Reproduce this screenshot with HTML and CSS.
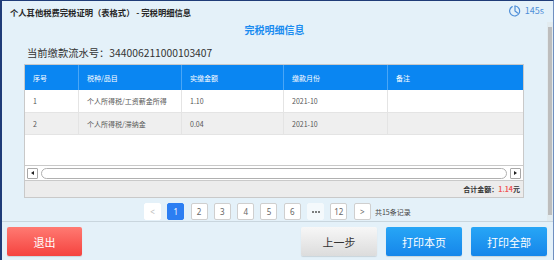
FILE: index.html
```html
<!DOCTYPE html>
<html lang="zh-CN">
<head>
<meta charset="utf-8">
<title>完税明细信息</title>
<link rel="stylesheet" href="styles.css">
</head>
<body>
<div class="window">
  <div class="titlebar">
    <div class="title">个人其他税费完税证明（表格式） - 完税明细信息</div>
    <div class="timer">
      <svg class="clock" width="12" height="12" viewBox="0 0 12 12">
        <path d="M3.2 1.6 A5 5 0 1 0 6 1" fill="none" stroke="#4f8fd8" stroke-width="1.2" stroke-linecap="round"/>
        <path d="M6 1 L6 6 L8.6 8" fill="none" stroke="#4f8fd8" stroke-width="1.2" stroke-linecap="round" stroke-linejoin="round"/>
      </svg>
      <span>145s</span>
    </div>
  </div>
  <div class="main">
    <div class="content">
      <div class="heading">完税明细信息</div>
      <div class="serial">当前缴款流水号：344006211000103407</div>
      <div class="table">
        <div class="row head">
          <div class="cell">序号</div>
          <div class="cell">税种/品目</div>
          <div class="cell">实缴金额</div>
          <div class="cell">缴款月份</div>
          <div class="cell">备注</div>
        </div>
        <div class="row r1">
          <div class="cell">1</div>
          <div class="cell">个人所得税/工资薪金所得</div>
          <div class="cell">1.10</div>
          <div class="cell">2021-10</div>
          <div class="cell"></div>
        </div>
        <div class="row r2">
          <div class="cell">2</div>
          <div class="cell">个人所得税/滞纳金</div>
          <div class="cell">0.04</div>
          <div class="cell">2021-10</div>
          <div class="cell"></div>
        </div>
        <div class="empty"></div>
        <div class="hscroll">
          <div class="sbtn"><span class="tri-l"></span></div>
          <div class="track"></div>
          <div class="sbtn"><span class="tri-r"></span></div>
        </div>
        <div class="total">合计金额：<span class="amt">1.14</span>元</div>
      </div>
      <div class="pager">
        <div class="pg nav dis">&lt;</div>
        <div class="pg active">1</div>
        <div class="pg">2</div>
        <div class="pg">3</div>
        <div class="pg">4</div>
        <div class="pg">5</div>
        <div class="pg">6</div>
        <div class="pg more"><i></i><i></i><i></i></div>
        <div class="pg">12</div>
        <div class="pg nav">&gt;</div>
        <div class="count">共15条记录</div>
      </div>
    </div>
    <div class="vscroll"><div class="thumb"></div></div>
  </div>
  <div class="footer">
    <button class="btn red">退出</button>
    <div class="right">
      <button class="btn gray">上一步</button>
      <button class="btn blue">打印本页</button>
      <button class="btn blue">打印全部</button>
    </div>
  </div>
</div>
</body>
</html>
```
FILE: styles.css
```css
* { box-sizing: border-box; }
html, body { margin: 0; padding: 0; }
body {
  font-family: "Noto Sans CJK SC", "Noto Sans", sans-serif;
  width: 554px;
  height: 260px;
  overflow: hidden;
}
.window {
  width: 554px;
  height: 260px;
  background: #e4f1f9;
  border-top: 1px solid #1f3c78;
  border-left: 2px solid #1f3c78;
  border-right: 1px solid #6f8fc0;
  display: flex;
  flex-direction: column;
}
.titlebar {
  height: 21px;
  flex: none;
  display: flex;
  align-items: center;
  justify-content: space-between;
  padding: 0 9px 0 8px;
}
.title {
  font-size: 8.3px;
  font-weight: bold;
  color: #262626;
  line-height: 12px;
}
.timer {
  display: flex;
  align-items: center;
  gap: 4px;
  color: #4f8fd8;
  font-size: 9px;
  line-height: 12px;
  margin-top: -2px;
}
.clock { display: block; }
.main {
  height: 199px;
  flex: none;
  display: flex;
}
.content {
  flex: 1;
  display: flex;
  flex-direction: column;
}
.heading {
  margin-top: 1px;
  height: 14px;
  line-height: 14px;
  text-align: center;
  font-size: 10px;
  font-weight: bold;
  color: #1a8cf0;
}
.serial {
  margin-top: 9px;
  height: 14px;
  line-height: 14px;
  padding-left: 25px;
  font-size: 10.3px;
  color: #333;
}
.table {
  margin: 4px 0 0 22px;
  width: 500px;
  border: 1px solid #c9c9c9;
  background: #fff;
  display: flex;
  flex-direction: column;
}
.row {
  display: grid;
  grid-template-columns: 54px 103px 102px 104px 1fr;
  font-size: 7px;
  color: #555;
}
.cell {
  padding-left: 8px;
  display: flex;
  align-items: center;
  border-right: 1px solid #e4e4e4;
}
.cell:last-child { border-right: none; }
.head {
  height: 25px;
  background: #0a86f2;
  color: #fff;
}
.head .cell { border-right-color: #4aa6f6; }
.r1 { height: 23px; border-bottom: 1px solid #e4e4e4; }
.r2 { height: 22px; background: #efefef; border-bottom: 1px solid #e4e4e4; }
.empty { height: 30px; }
.hscroll {
  height: 15px;
  border-top: 1px solid #c9c9c9;
  display: flex;
  align-items: center;
  padding: 0 2px;
  gap: 3px;
}
.sbtn {
  width: 11px;
  height: 11px;
  border: 1px solid #a8a8a8;
  border-radius: 1px;
  background: #fff;
  display: flex;
  align-items: center;
  justify-content: center;
}
.tri-l {
  width: 0; height: 0;
  border-top: 2.5px solid transparent;
  border-bottom: 2.5px solid transparent;
  border-right: 3px solid #222;
}
.tri-r {
  width: 0; height: 0;
  border-top: 2.5px solid transparent;
  border-bottom: 2.5px solid transparent;
  border-left: 3px solid #222;
}
.track {
  flex: 1;
  height: 11px;
  border: 1px solid #b0b0b0;
  border-radius: 6px;
  background: #fff;
}
.total {
  height: 17px;
  border-top: 1px solid #c9c9c9;
  background: #ececec;
  font-size: 7px;
  font-weight: bold;
  color: #333;
  display: flex;
  align-items: center;
  justify-content: flex-end;
  padding-right: 3px;
}
.amt { color: #f05555; }
.pager {
  margin-top: 5px;
  padding-left: 142px;
  display: flex;
  align-items: center;
  gap: 6.3px;
  height: 17px;
}
.pg {
  width: 17px;
  height: 17px;
  border: 1px solid #cfcfcf;
  border-radius: 2px;
  background: #fff;
  color: #666;
  font-size: 8px;
  display: flex;
  align-items: center;
  justify-content: center;
  font-family: "Noto Sans", sans-serif;
}
.pg.dis { border-color: #fff; color: #bbb; }
.pg.more {
  border-color: #f4f9fc;
  background: #f4f9fc;
  gap: 1px;
}
.pg.more i {
  width: 2px;
  height: 2px;
  border-radius: 50%;
  background: #555;
}
.pg.active { background: #2c7ef2; border-color: #2c7ef2; color: #fff; }
.count {
  font-size: 7px;
  color: #444;
  margin-left: -2px;
}
.vscroll {
  width: 6px;
  background: #e2ebef;
  display: flex;
  flex-direction: column;
  padding: 5px 1px 6px 1px;
}
.thumb {
  flex: 1;
  background: #bdbdbd;
}
.footer {
  flex: 1;
  border-top: 1px solid #c9d6de;
  display: flex;
  justify-content: space-between;
  align-items: flex-start;
  padding: 5px 6px 0 5px;
}
.right {
  display: flex;
  gap: 9px;
}
.btn {
  height: 29px;
  width: 76px;
  border: none;
  border-radius: 2px;
  font-family: "Noto Sans CJK SC", sans-serif;
  font-size: 11px;
  color: #fff;
  padding: 0;
}
.red {
  width: 75px;
  background: linear-gradient(#ff7a72, #f5433f);
  box-shadow: 0 1px 1px rgba(0,0,0,0.12);
}
.gray {
  background: linear-gradient(#f7f7f7, #dcdcdc);
  color: #333;
  box-shadow: 0 1px 1px rgba(0,0,0,0.12);
}
.blue {
  background: linear-gradient(#27a6f6, #1686ea);
  box-shadow: 0 1px 1px rgba(0,0,0,0.12);
}
```
